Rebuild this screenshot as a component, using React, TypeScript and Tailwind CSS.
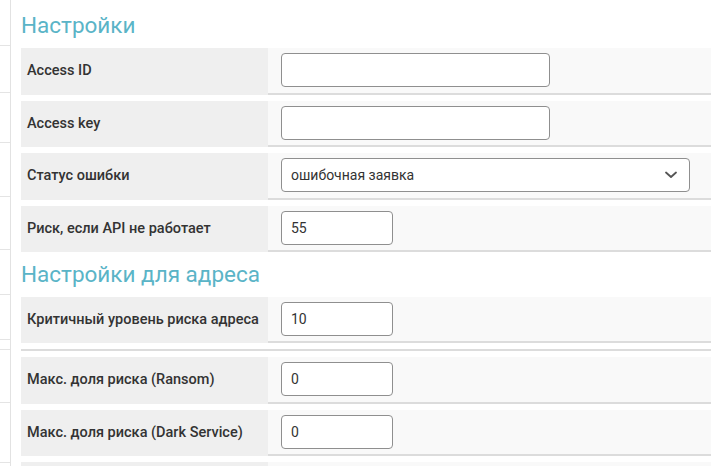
import React from 'react';

interface FieldRowProps {
  label: string;
  children?: React.ReactNode;
}

const FieldRow: React.FC<FieldRowProps> = ({ label, children }) => (
  <div className="flex h-[46.5px] mb-[6px]">
    <div className="w-[247px] shrink-0 bg-[#efefef] flex items-center pl-[6px] text-[14.5px] font-medium text-[#333]">
      {label}
    </div>
    <div className="flex-1 bg-[#f9f9f9] border-b-2 border-[#dcdcdc] flex items-center pl-[13px]">
      {children}
    </div>
  </div>
);

const TextInput: React.FC<{ value?: string; wide?: boolean }> = ({ value = '', wide }) => (
  <input
    type="text"
    defaultValue={value}
    className={`${wide ? 'w-[269px]' : 'w-[112px]'} h-[34px] bg-white border border-[#8f8f8f] rounded-[4px] px-[9px] text-[14px] text-[#333] outline-none`}
  />
);

const SectionTitle: React.FC<{ children: React.ReactNode; className?: string }> = ({ children, className }) => (
  <h2 className={`h-[32px] leading-[32px] text-[22.5px] text-[#5ab4c7] font-normal ${className ?? ''}`}>{children}</h2>
);

// faint lines of the table behind the panel
const sideLines = [46, 47, 50, 54, 53, 45, 45, 10, 53, 60];

export default function App() {
  return (
    <div className="w-[711px] h-[466px] overflow-hidden bg-white flex font-['Roboto',_'Liberation_Sans',_sans-serif]">
      <div className="w-[11px] shrink-0 border-r border-[#e2e2e2] flex flex-col">
        {sideLines.map((h, i) => (
          <div key={i} style={{ height: h }} className="shrink-0 border-b border-[#e4e4e4]" />
        ))}
      </div>
      <div className="flex-1 pl-[10px]">
        <SectionTitle className="mt-[8.5px] mb-[7.5px]">Настройки</SectionTitle>
        <FieldRow label="Access ID">
          <TextInput wide />
        </FieldRow>
        <FieldRow label="Access key">
          <TextInput wide />
        </FieldRow>
        <FieldRow label="Статус ошибки">
          <div className="w-[409px] h-[34px] bg-white border border-[#8f8f8f] rounded-[4px] pl-[9px] pr-[12px] flex items-center justify-between text-[14px] text-[#333]">
            <span>ошибочная заявка</span>
            <svg width="12" height="8" viewBox="0 0 12 8" fill="none">
              <path d="M1 1.5 L6 6 L11 1.5" stroke="#555" strokeWidth="1.8" strokeLinecap="round" strokeLinejoin="round" />
            </svg>
          </div>
        </FieldRow>
        <FieldRow label="Риск, если API не работает">
          <TextInput value="55" />
        </FieldRow>
        <SectionTitle className="mt-[0.5px] mb-[6.5px]">Настройки для адреса</SectionTitle>
        <FieldRow label="Критичный уровень риска адреса">
          <TextInput value="10" />
        </FieldRow>
        <div className="h-[2px] bg-[#dcdcdc] mb-[6px]" />
        <FieldRow label="Макс. доля риска (Ransom)">
          <TextInput value="0" />
        </FieldRow>
        <FieldRow label="Макс. доля риска (Dark Service)">
          <TextInput value="0" />
        </FieldRow>
        <FieldRow label="" />
      </div>
    </div>
  );
}
